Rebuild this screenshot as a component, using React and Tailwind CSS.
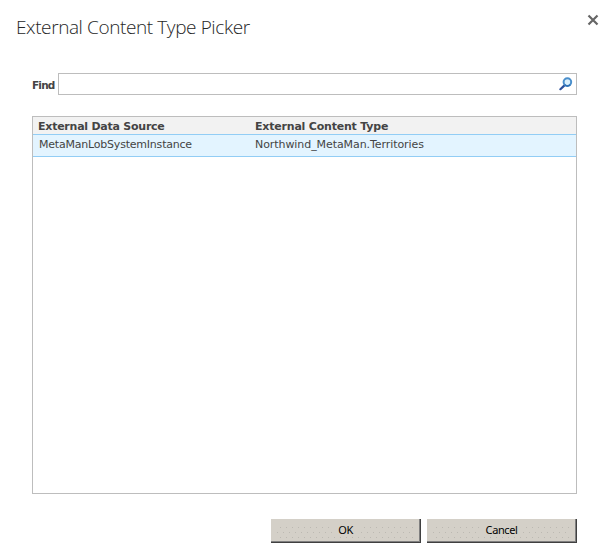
import React, { useState } from "react";

const contentTypes = [
  { source: "MetaManLobSystemInstance", type: "Northwind_MetaMan.Territories" },
];

const SearchIcon = () => (
  <svg width="14" height="14" viewBox="0 0 14 14" fill="none">
    <path d="M1.4 12.2 5.2 8.6" stroke="#2a4f9c" strokeWidth="2.2" strokeLinecap="round" />
    <circle cx="8.4" cy="5.1" r="3.8" fill="#d9effc" stroke="#4a8fcc" strokeWidth="2" />
    <path d="M5.6 7.7a3.8 3.8 0 0 0 5.6 0" stroke="#2f6fb5" strokeWidth="1.6" />
  </svg>
);

const CloseIcon = () => (
  <svg width="12" height="12" viewBox="0 0 12 12" fill="none">
    <path d="m1.5 1.5 9 9M10.5 1.5l-9 9" stroke="#666" strokeWidth="2.2" />
  </svg>
);

const DialogButton = ({ id, children }) => (
  <button
    type="button"
    className="relative w-[150px] h-6 bg-[#d4d0c8] border-r border-b border-[#404040] shadow-[inset_-1px_-1px_0_#808080] font-['Noto_Sans','Open_Sans',sans-serif] text-[11px] tracking-[-0.4px] text-black leading-none"
  >
    {/* Dotted texture */}
    <svg className="absolute left-1 top-2" width="140" height="11" shapeRendering="crispEdges">
      <defs>
        <pattern id={id} width="6" height="10" patternUnits="userSpaceOnUse">
          <path d="M5 0h1v1h-1zM2 5h1v1h-1z" fill="#bcb9b2" />
        </pattern>
      </defs>
      <rect width="140" height="11" fill={`url(#${id})`} />
    </svg>
    <span className="relative inline-block bg-[#d4d0c8] px-1.5 pb-0.5">{children}</span>
  </button>
);

const App = () => {
  const [query, setQuery] = useState("");

  return (
    <div className="w-[605px] h-[554px] bg-white text-[#444] font-['DejaVu_Sans',sans-serif] text-[11px] flex flex-col overflow-hidden">
      {/* Title bar */}
      <div className="flex justify-between pl-4 pr-1.5 h-[73px]">
        <h1 className="mt-[13px] h-7 leading-7 font-['Open_Sans',sans-serif] font-light text-[19px] tracking-[-0.4px] text-[#262626] whitespace-nowrap">
          External Content Type Picker
        </h1>
        <button type="button" aria-label="Close" className="mt-3.5 h-3">
          <CloseIcon />
        </button>
      </div>

      {/* Search */}
      <div className="flex items-center pl-8 pr-7 h-[22px]">
        <label htmlFor="find" className="w-[26px] pt-1 font-bold text-[10.5px] tracking-[-0.8px]">Find</label>
        <div className="flex-1 flex items-center h-[22px] border border-[#bdbdbd] pr-[3px]">
          <input
            id="find"
            value={query}
            onChange={(e) => setQuery(e.target.value)}
            className="flex-1 h-full px-1 outline-none"
          />
          <SearchIcon />
        </div>
      </div>

      {/* Results */}
      <div className="mt-[21px] ml-8 mr-7 h-[378px] border border-[#bdbdbd]">
        <div className="flex h-[17px] pt-[3px] items-center bg-[#f2f2f2] font-bold whitespace-nowrap">
          <div className="w-[217px] pl-[5px] tracking-[-0.24px]">External Data Source</div>
          <div className="pl-[5px] tracking-[-0.2px]">External Content Type</div>
        </div>
        {contentTypes.map((item) => (
          <div
            key={item.type}
            className="flex h-[23px] pt-0.5 leading-4 bg-[#e3f4ff] border-y border-[#92cdf5] whitespace-nowrap"
          >
            <div className="w-[217px] pl-1.5 tracking-[-0.21px]">{item.source}</div>
            <div className="pl-[5px] tracking-[-0.07px]">{item.type}</div>
          </div>
        ))}
      </div>

      {/* Actions */}
      <div className="flex justify-end gap-1.5 mt-[25px] pr-7">
        <DialogButton id="dots-ok">OK</DialogButton>
        <DialogButton id="dots-cancel">Cancel</DialogButton>
      </div>
    </div>
  );
};

export default App;
